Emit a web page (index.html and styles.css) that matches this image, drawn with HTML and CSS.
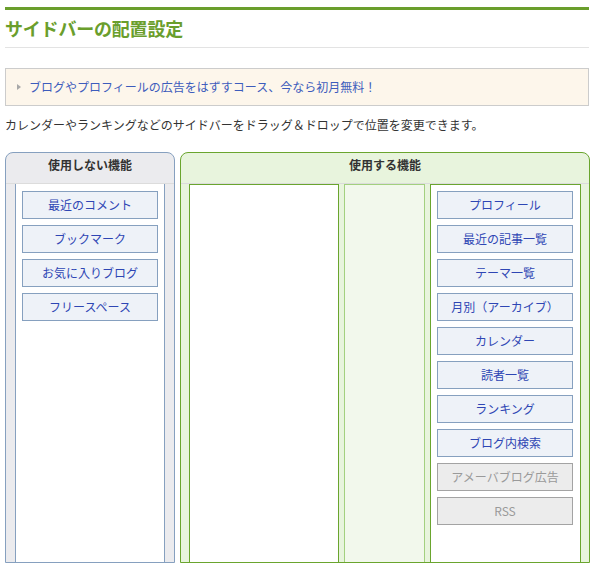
FILE: index.html
```html
<!DOCTYPE html>
<html lang="ja">
<head>
<meta charset="utf-8">
<title>サイドバーの配置設定</title>
<link rel="stylesheet" href="styles.css">
</head>
<body>
<div class="page">
  <div class="topbar"></div>
  <h1 class="title">サイドバーの配置設定</h1>
  <div class="notice"><span class="bullet"></span><a class="notice-link">ブログやプロフィールの広告をはずすコース、今なら初月無料！</a></div>
  <p class="desc">カレンダーやランキングなどのサイドバーをドラッグ＆ドロップで位置を変更できます。</p>
  <div class="panels">
    <div class="panel panel-off">
      <div class="panel-head">使用しない機能</div>
      <div class="panel-body">
        <div class="col col-off">
          <div class="btn">最近のコメント</div>
          <div class="btn">ブックマーク</div>
          <div class="btn">お気に入りブログ</div>
          <div class="btn">フリースペース</div>
        </div>
      </div>
    </div>
    <div class="panel panel-on">
      <div class="panel-head">使用する機能</div>
      <div class="panel-body">
        <div class="col col-main"></div>
        <div class="col col-mid"></div>
        <div class="col col-side">
          <div class="btn">プロフィール</div>
          <div class="btn">最近の記事一覧</div>
          <div class="btn">テーマ一覧</div>
          <div class="btn">月別（アーカイブ）</div>
          <div class="btn">カレンダー</div>
          <div class="btn">読者一覧</div>
          <div class="btn">ランキング</div>
          <div class="btn">ブログ内検索</div>
          <div class="btn btn-disabled">アメーバブログ広告</div>
          <div class="btn btn-disabled">RSS</div>
        </div>
      </div>
    </div>
  </div>
</div>
</body>
</html>
```
FILE: styles.css
```css
* { box-sizing: border-box; }
html, body { margin: 0; padding: 0; background: #fff; }
body {
  font-family: "Noto Sans CJK JP", "Liberation Sans", sans-serif;
  font-size: 12px;
  color: #333;
}
.page {
  margin: 0 4px 0 5px;
  padding-top: 7px;
}
.topbar {
  height: 3px;
  background: #6a9e2c;
}
.title {
  margin: 6px 0 0;
  font-size: 18px;
  line-height: 24px;
  font-weight: bold;
  color: #6a9e2c;
  padding-bottom: 7px;
  border-bottom: 1px solid #e3e3e3;
  letter-spacing: -0.2px;
}
.notice {
  margin-top: 20px;
  height: 38px;
  border: 1px solid #cccccc;
  background: #fdf6eb;
  display: flex;
  align-items: center;
  padding-left: 11px;
}
.bullet {
  width: 0;
  height: 0;
  border-top: 3px solid transparent;
  border-bottom: 3px solid transparent;
  border-left: 4px solid #a8a8a8;
  margin-right: 8px;
}
.notice-link {
  color: #3d5cbc;
  line-height: 18px;
}
.desc {
  margin: 10px 0 0;
  line-height: 18px;
  color: #333;
}
.panels {
  margin-top: 18px;
  display: flex;
  gap: 5px;
}
.panel {
  height: 411px;
  border: 1px solid;
  border-radius: 8px 8px 0 0;
  display: flex;
  flex-direction: column;
}
.panel-off {
  width: 170px;
  border-color: #86a0bf;
  background: #ebebee;
}
.panel-on {
  width: 410px;
  border-color: #6aa52e;
  background: #e8f4dd;
}
.panel-head {
  height: 31px;
  padding-top: 3px;
  line-height: 18px;
  text-align: center;
  font-weight: bold;
  color: #333;
  border-bottom: 1px solid #dcdcdc;
}
.panel-body {
  flex: 1;
  display: flex;
  gap: 5px;
  padding: 0 8px;
}
.panel-off .panel-body { padding: 0 9px; }
.col {
  border: 1px solid;
  border-bottom: none;
  border-top: none;
  background: #fff;
  padding: 6px 6px 0;
  display: flex;
  flex-direction: column;
  gap: 6px;
}
.col-off { width: 150px; border-color: #86a0bf; padding-top: 7px; }
.col-main { width: 150px; border-color: #6aa52e; border-top: 1px solid #6aa52e; }
.col-mid { width: 81px; border-color: #a3d07f; background: #f2f8ec; border-top: 1px solid #a3d07f; }
.col-side { width: 151px; border-color: #6aa52e; border-top: 1px solid #6aa52e; padding-top: 6px; }
.btn {
  height: 28px;
  border: 1px solid #86a0bf;
  background: #eef2f8;
  color: #2e46b4;
  text-align: center;
  line-height: 26px;
  font-size: 12px;
}
.col-side .btn { width: 136px; }
.btn-disabled {
  border-color: #a3a3a3;
  background: #ececec;
  color: #9a9a9a;
}
```
